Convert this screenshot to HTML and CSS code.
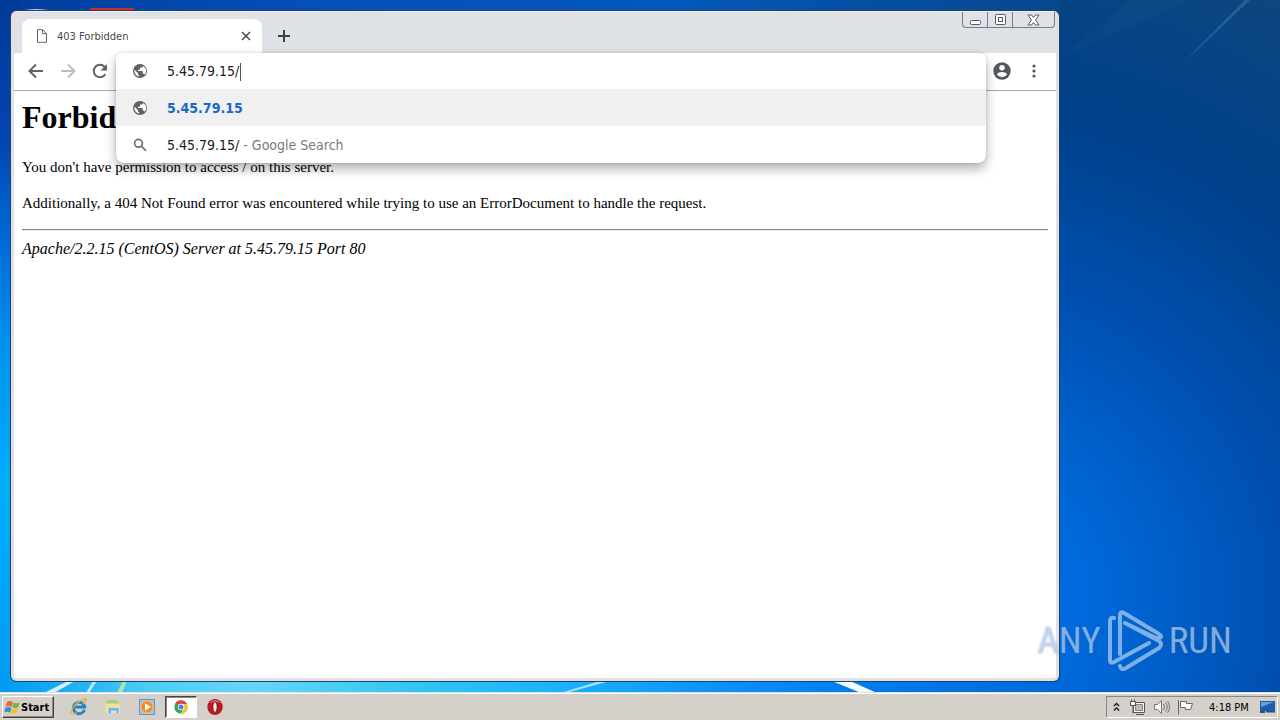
FILE: index.html
```html
<!DOCTYPE html>
<html lang="en">
<head>
<meta charset="utf-8">
<title>403 Forbidden</title>
<link rel="stylesheet" href="styles.css">
</head>
<body>
<div class="desktop">
  <svg class="wallpaper" viewBox="0 0 1280 693" preserveAspectRatio="none" aria-hidden="true">
    <defs>
      <radialGradient id="glow" gradientUnits="userSpaceOnUse" cx="960" cy="600" r="680">
        <stop offset="0" stop-color="#0070e2"/><stop offset=".18" stop-color="#006adc"/>
        <stop offset=".48" stop-color="#004faf"/><stop offset=".74" stop-color="#004089"/><stop offset="1" stop-color="#0d4780"/>
      </radialGradient>
      <linearGradient id="top" x1="0" x2="1">
        <stop offset="0" stop-color="#003c9c"/><stop offset=".3" stop-color="#0550b8"/><stop offset=".65" stop-color="#0457b8"/><stop offset="1" stop-color="#06478e"/>
      </linearGradient>
      <linearGradient id="left" x1="0" y1="0" x2="0" y2="1">
        <stop offset="0" stop-color="#003a9a"/><stop offset=".2" stop-color="#0345b0"/><stop offset=".35" stop-color="#006bd8"/>
        <stop offset=".5" stop-color="#0092ee"/><stop offset=".7" stop-color="#00aef8"/><stop offset="1" stop-color="#009bf4"/>
      </linearGradient>
      <linearGradient id="bottom" x1="0" x2="1">
        <stop offset="0" stop-color="#009bf4"/><stop offset=".06" stop-color="#1cacf3"/><stop offset=".14" stop-color="#4ccdf3"/>
        <stop offset=".24" stop-color="#67d5fa"/><stop offset=".38" stop-color="#34c7f0"/><stop offset=".52" stop-color="#1cb3fb"/>
        <stop offset=".7" stop-color="#098df8"/><stop offset=".85" stop-color="#0078e8"/><stop offset="1" stop-color="#0069d9"/>
      </linearGradient>
    </defs>
    <rect width="1280" height="693" fill="url(#glow)"/>
    <rect width="1060" height="14" fill="url(#top)"/>
    <rect width="20" height="693" fill="url(#left)"/>
    <rect y="676" width="1060" height="17" fill="url(#bottom)"/>
    <path d="M1180 66 1245 0h5Z" fill="#5d94c8" opacity=".35"/>
    <path d="M1060 58 1130 0h60Z" fill="#3b78b8" opacity=".08"/>
    <path d="M44 693 68 681h7L54 693Z" fill="#d5f2fc"/>
    <path d="M86 693l7-12h4l-8 12Z" fill="#b4ebf9"/>
    <path d="M117 693l6-12h4l-5 12Z" fill="#a8e8a0"/>
    <path d="M560 693l40-12h10l-44 12Z" fill="#a6e2ff"/>
    <path d="M832 681h18l27 12h-16Z" fill="#f6fdff"/>
    <path d="M90 8h44v5H90Z" fill="#d22b2b"/>
    <path d="M25 10q11-2 23 0v2H25Z" fill="#b5c9df"/>
  </svg>

  <div class="workspace">
    <main class="window">
      <header class="tabstrip">
        <div class="tab">
          <svg class="tab-icon" width="12" height="14" viewBox="0 0 12 14" fill="none" stroke="#5f6368"><path d="M1.5.7h5.3l3.7 3.7v8.9h-9ZM6.6.7v4h3.9"/></svg>
          <span class="tab-title">403 Forbidden</span>
          <button class="plain tab-close" aria-label="Close tab"><svg width="10" height="10" viewBox="0 0 10 10" stroke="#4b4f54" stroke-width="1.6"><path d="m1 1 8 8M9 1 1 9"/></svg></button>
        </div>
        <button class="plain new-tab" aria-label="New tab"><svg width="12" height="12" viewBox="0 0 12 12" stroke="#3c4043" stroke-width="2"><path d="M6 0v12M0 6h12"/></svg></button>
        <div class="controls">
          <button class="plain" aria-label="Minimize"><svg width="13" height="13" viewBox="0 0 13 13"><rect x="1.5" y="7.5" width="10" height="4" rx="1" fill="#fff" stroke="#555864"/></svg></button>
          <button class="plain" aria-label="Maximize"><svg width="13" height="12" viewBox="0 0 13 12" fill="#fff" stroke="#555864"><rect x="1.5" y=".5" width="10" height="10" rx="1"/><rect x="4.5" y="3.5" width="4" height="4"/></svg></button>
          <button class="plain control-close" aria-label="Close"><svg width="13" height="12" viewBox="0 0 13 12" fill="#fff" stroke="#555864"><path d="M1 1h3.5l2 2.5 2-2.5H12L8.500 6 12 11H8.500l-2-2.500-2 2.500H1l3.500-5Z"/></svg></button>
        </div>
      </header>

      <div class="toolbar">
        <button class="plain tool" aria-label="Back"><svg width="16" height="16" viewBox="0 0 16 16" fill="none" stroke="#5f6368" stroke-width="2"><path d="M15 8H2M8 1.500 1.500 8 8 14.500"/></svg></button>
        <button class="plain tool" aria-label="Forward" disabled><svg width="16" height="16" viewBox="0 0 16 16" fill="none" stroke="#bcbec1" stroke-width="2"><path d="M1 8h13M8 1.500 14.500 8 8 14.500"/></svg></button>
        <button class="plain tool" aria-label="Reload"><svg width="16" height="16" viewBox="0 0 16 16"><path d="M13.300 11.200A6.200 6.200 0 1 1 12.600 3.800" fill="none" stroke="#5f6368" stroke-width="2"/><path d="M15 1v6.500H8.500Z" fill="#5f6368"/></svg></button>
        <div class="address">
          <div class="popup">
            <div class="row">
              <svg class="row-icon" viewBox="0 0 16 16"><use href="#globe"/></svg>
              <div class="field">
                <input class="url" type="text" value="5.45.79.15/" aria-label="Address and search bar">
                <span class="caret"></span>
              </div>
            </div>
            <a class="row row-selected" href="#site">
              <svg class="row-icon" viewBox="0 0 16 16"><defs><g id="globe"><circle cx="8" cy="8" r="7" fill="#5f6368"/><path d="M7.200 13.600A5.700 5.700 0 0 1 2.500 6.800L5.800 10v.8q0 1.200 1.400 1.400ZM11 2.900q-.1 1.700-1.500 1.700H8.100v1.300q0 .8-.8.800H6V8h4q.8 0 .8.800v2h.7q.9 0 1.300.9A5.700 5.700 0 0 0 11 2.900Z" fill="#fff"/></g></defs><use href="#globe"/></svg>
              <span class="match">5.45.79.15</span>
            </a>
            <a class="row" href="#search">
              <svg class="row-icon" viewBox="0 0 16 16" fill="none" stroke="#6d7176" stroke-width="1.700"><circle cx="6.500" cy="6.300" r="3.900"/><path d="m9.400 9.200 4.600 4.600"/></svg>
              <span>5.45.79.15/<span class="hint"> - Google Search</span></span>
            </a>
          </div>
        </div>
        <button class="plain tool" aria-label="Profile"><svg width="18" height="18" viewBox="0 0 18 18"><circle cx="9" cy="9" r="8.700" fill="#53575d"/><circle cx="9" cy="5.700" r="2.700" fill="#fff"/><path d="M3.800 12.300Q5.500 10 9 10t5.200 2.300Q12.400 15.200 9 15.200t-5.200-2.900Z" fill="#fff"/></svg></button>
        <button class="plain tool" aria-label="Menu"><svg width="4" height="14" viewBox="0 0 4 14" fill="#53575d"><circle cx="2" cy="2" r="1.600"/><circle cx="2" cy="7" r="1.600"/><circle cx="2" cy="12" r="1.600"/></svg></button>
      </div>

      <article class="page">
        <h1>Forbidden</h1>
        <p>You don't have permission to access / on this server.</p>
        <p>Additionally, a 404 Not Found error was encountered while trying to use an ErrorDocument to handle the request.</p>
        <hr>
        <address>Apache/2.2.15 (CentOS) Server at 5.45.79.15 Port 80</address>
      </article>
    </main>
  </div>

  <div class="watermark">
    <span>ANY</span>
    <svg width="56" height="62" viewBox="0 0 56 62" fill="none" stroke="currentColor" stroke-width="4" stroke-linejoin="round" stroke-linecap="round"><path d="M7 8Q3 7 3 11v39q0 4 4 2l35-19M13 44V5q0-4 4-2l35 21q4 3 0 4h-3L18 13M13 56q1 5 6 2l33-20q4-4 0-7L18 13"/></svg>
    <span>RUN</span>
  </div>

  <footer class="taskbar">
    <button class="start"><svg width="17" height="17" viewBox="0 0 17 17"><path d="M3 3q3-2 6 0L7.500 8q-3-2-6-.3Z" fill="#ee6334"/><path d="M9.800 3.500q3 1.500 6 0L14.300 8.300q-3 1.700-6 0Z" fill="#74b843"/><path d="M1.300 8.800q3-1.500 6 .3l-1.400 4.700q-3-2-5.700-.3Z" fill="#398bd5"/><path d="M8 9.500q3 1.700 6 0l-1.300 4.600q-3 1.800-6.200.2Z" fill="#f6bd32"/></svg>Start</button>
    <nav class="quick">
      <button class="plain launcher" aria-label="Internet Explorer"><svg width="18" height="18" viewBox="0 0 18 18" fill="none"><path d="M14.500 11.800A5.700 5.700 0 1 1 14.700 9H5" stroke="#1f83cf" stroke-width="2.800"/><path d="M13 6Q18 .5 15 1 9 2 3.500 9-.5 15 2 16q2 .6 5-1.500" stroke="#e6b62d" stroke-width="1.300"/></svg></button>
      <button class="plain launcher" aria-label="File Explorer"><svg width="18" height="18" viewBox="0 0 18 18"><path d="M2 3h5l1 1h7v10H2Z" fill="#dfb854"/><path d="M4 2h9v5H4Z" fill="#9bd187"/><path d="M1.500 5.500h14V15h-14Z" fill="#f7df91"/><path d="M4 16V9.500h11V16h-3v-3H7.500v3Z" fill="#70b8dd" stroke="#d6effa" stroke-width=".7"/></svg></button>
      <button class="plain launcher" aria-label="Media Player"><svg width="18" height="18" viewBox="0 0 18 18"><rect x="1.500" y="1.500" width="15" height="15" fill="#9bc9ee" stroke="#5c97c8"/><circle cx="9" cy="9" r="6.200" fill="#f48a1d" stroke="#ffc474"/><path d="m7 5.300 6 3.700-6 3.700Z" fill="#fff"/></svg></button>
      <button class="plain launcher launcher-active" aria-label="Chrome"><svg width="14" height="14" viewBox="0 0 14 14"><circle cx="7" cy="7" r="6.600" fill="#31a753"/><path d="M7 7 1.300 3.600A6.600 6.600 0 0 1 12.800 3.800L7 4Z" fill="#e24436"/><path d="M7 4h5.900A6.600 6.600 0 0 1 6.700 13.600L9.600 8.500Z" fill="#fbc72f"/><circle cx="7" cy="7" r="3.200" fill="#fff"/><circle cx="7" cy="7" r="2.500" fill="#4286ed"/></svg></button>
      <button class="plain launcher" aria-label="Opera"><svg width="18" height="18" viewBox="0 0 18 18"><ellipse cx="9" cy="9" rx="7.700" ry="8" fill="#b81923"/><path d="M3 5Q9-1 15 5q-6-2-12 0Z" fill="#e66a6b"/><ellipse cx="9" cy="9" rx="2.200" ry="5.500" fill="#f5e8e7" stroke="#7a1015"/></svg></button>
    </nav>
    <div class="tray">
      <button class="plain tray-item" aria-label="Show hidden icons"><svg width="7" height="10" viewBox="0 0 8 10" fill="none" stroke="#111" stroke-width="1.500"><path d="m1 4 3-3 3 3M1 9l3-3 3 3"/></svg></button>
      <button class="plain tray-item" aria-label="Network"><svg width="17" height="17" viewBox="0 0 17 17" fill="#f5f5f2" stroke="#555"><path d="M4.500 3.500h11v10h-11Z"/><path d="M6.500 5.500h7v6h-7Z" fill="#bdbdb8" stroke="#888"/><path d="M1.500 2.500h5v4h-5ZM2.500.500v2M5.500.500v2M4 6.500v8M7 15.500h8"/></svg></button>
      <button class="plain tray-item" aria-label="Volume"><svg width="17" height="16" viewBox="0 0 17 16" fill="#fafaf8" stroke="#777"><path d="M1.500 5.500h3l4-4v13l-4-4h-3Z"/><path d="M10.500 5q2 3 0 6M12.500 3.500q3.500 4.500 0 9M14.500 2q4 6 0 12" fill="none"/></svg></button>
      <button class="plain tray-item" aria-label="Action Center"><svg width="17" height="16" viewBox="0 0 17 16" fill="#fff" stroke="#666"><path d="M1.500 1v14.500M3.500 2.500h6v2h6l-2 6h-5v-2h-5Z"/></svg></button>
      <time class="clock">4:18 PM</time>
      <button class="plain tray-item" aria-label="Show desktop"><svg width="17" height="14" viewBox="0 0 17 14"><path d="M1 1h15v10H1Z" fill="#1e5cb0"/><path d="M2 2h13L2 7Z" fill="#6a9fdc"/><path d="M1 10.500h5V13H1ZM7 11h9v1.500H7Z" fill="#294f82"/></svg></button>
    </div>
  </footer>
</div>
</body>
</html>
```
FILE: styles.css
```css
* { box-sizing: border-box; }

body {
  margin: 0;
  font-family: "DejaVu Sans Condensed", "DejaVu Sans", sans-serif;
  font-size: 11px;
  color: #202124;
}

button { font: inherit; color: inherit; }

.plain {
  display: flex;
  align-items: center;
  justify-content: center;
  padding: 0;
  border: 0;
  background: none;
}

.desktop {
  position: relative;
  display: flex;
  flex-direction: column;
  min-height: 100vh;
  overflow: hidden;
  background: #004fae;
}

.wallpaper {
  position: absolute;
  inset: 0 0 27px;
  width: 100%;
  height: calc(100% - 27px);
}

.workspace {
  position: relative;
  display: flex;
  flex: 1;
  padding: 11px 221px 12px 11px;
}

.window {
  display: flex;
  flex: 1;
  flex-direction: column;
  min-width: 0;
  border: 3px solid #dee1e6;
  border-top: 1px solid #eceef2;
  border-radius: 5px;
  background: #fff;
  outline: 1px solid #27405f;
}

.tabstrip {
  display: flex;
  align-items: flex-end;
  height: 41px;
  background: #dee1e6;
}

.tab {
  display: flex;
  align-items: center;
  width: 240px;
  height: 34px;
  margin-left: 8px;
  padding: 0 10px 0 14px;
  border-radius: 8px 8px 0 0;
  background: #fff;
}

.tab-title { flex: 1; margin-left: 9px; color: #45494d; }
.tab-close { width: 12px; height: 16px; }
.new-tab { width: 28px; height: 34px; margin-left: 8px; }

.controls {
  display: flex;
  align-self: flex-start;
  margin: 0 1px 0 auto;
  border: 1px solid #777a88;
  border-top: 0;
  border-radius: 0 0 4px 4px;
}
.controls button { width: 25px; height: 15px; border-right: 1px solid #777a88; }
.controls .control-close { width: 41px; border-right: 0; }

.toolbar {
  display: flex;
  height: 38px;
  padding: 0 6px;
  border-bottom: 1px solid #a5a8a8;
}
.tool { width: 32px; height: 36px; }

.address { position: relative; flex: 1; }

.popup {
  position: absolute;
  inset: 0 0 auto;
  overflow: hidden;
  border-radius: 6px 6px 8px 8px;
  background: #fff;
  box-shadow: 0 6px 12px rgba(0, 0, 0, .3), 0 0 3px rgba(0, 0, 0, .15);
  font-size: 14px;
}

.row {
  display: flex;
  align-items: center;
  height: 37px;
  padding-left: 16px;
  gap: 19px;
  color: #202124;
  text-decoration: none;
}
.row:first-child { height: 36px; }
.row-selected { background: #f0f0f0; }
.row-icon { width: 16px; height: 16px; }
.match { font-weight: bold; color: #1b66c9; }
.hint { color: #777b80; }

.field { position: relative; flex: 1; }
.url {
  width: 100%;
  padding: 0;
  border: 0;
  outline: 0;
  background: none;
  font: inherit;
  color: inherit;
}
.caret {
  position: absolute;
  top: 0;
  left: 73px;
  width: 1px;
  height: 18px;
  background: #555;
}

.page {
  padding: 8px;
  font: 16px "Liberation Serif", serif;
  color: #000;
}
.page h1 { margin: 0 0 22px; font-size: 32px; line-height: 37px; }
.page p { margin: 0 0 18px; font-size: 15px; line-height: 18px; }
.page hr { height: 2px; margin: 0 0 9px; border: 0; border-top: 1px solid #888; border-bottom: 1px solid #eee; }
.page p + hr { margin-top: -1px; }
.page address { line-height: 18px; }

.watermark {
  position: absolute;
  right: 48px;
  bottom: 48px;
  display: flex;
  align-items: center;
  gap: 6px;
  color: #a9c9ef;
  opacity: .75;
  font: 37px/62px "Roboto Condensed", "Open Sans Condensed", "Liberation Sans Narrow", "Liberation Sans", sans-serif;
  text-shadow: 0 0 3px rgba(60, 80, 110, .5);
}

.taskbar {
  position: relative;
  display: flex;
  align-items: center;
  height: 28px;
  margin-top: -1px;
  padding: 1px 2px 0;
  border-top: 1px solid #d8e4ea;
  background: #d5d0c9;
  box-shadow: inset 0 1px #fff;
}

.start {
  display: flex;
  align-items: center;
  width: 52px;
  height: 22px;
  padding: 0 0 0 1px;
  border: 1px solid;
  border-color: #fff #444 #444 #fff;
  background: #d5d0c9;
  box-shadow: inset -1px -1px #888;
  font-weight: bold;
  color: #000;
}

.quick { display: flex; gap: 2px; margin-left: 9px; }
.launcher { width: 32px; height: 22px; }
.launcher-active {
  border: 1px solid;
  border-color: #444 #fff #fff #444;
  background: #fff;
  box-shadow: inset 1px 1px #888;
}

.tray {
  display: flex;
  align-items: center;
  height: 22px;
  margin-left: auto;
  padding-left: 1px;
  border: 1px solid;
  border-color: #888 #fff #fff #888;
}
.tray-item { width: 24px; height: 20px; }
.tray-item:first-child { width: 17px; }
.tray-item:last-child { width: 19px; }
.clock { width: 61px; padding-left: 12px; white-space: nowrap; color: #000; }
```
